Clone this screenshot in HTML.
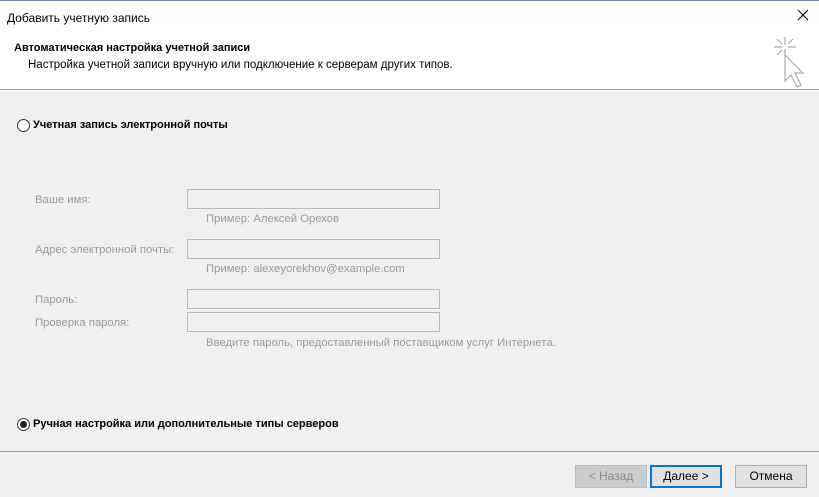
<!DOCTYPE html><html><head><style>
body{margin:0;width:819px;height:497px;overflow:hidden;background:#f0f0f0;font-family:"Liberation Sans",sans-serif;font-size:12px;color:#000;position:relative}
.a{position:absolute;white-space:nowrap}
.g{color:#9a9a9a;font-size:11.3px}
.in{position:absolute;left:187px;width:251px;height:18px;border:1px solid #b9b9b9;background:#f0f0f0}
.btn{position:absolute;top:465px;width:70px;height:21px;border:1px solid #adadad;background:#e1e1e1;text-align:center;line-height:21px;font-size:12px}
.r{position:absolute;width:11px;height:11px;border:1px solid #333;border-radius:50%;background:#fff}
</style></head><body>
<div class="a" style="left:0;top:0;width:819px;height:90px;background:#fff;border-top:1px solid #6b8fb5"></div>
<div class="a" style="left:0;top:89px;width:819px;height:1px;background:#a0a0a0"></div>
<div class="a" style="left:7px;top:11px;font-size:12px">Добавить учетную запись</div>
<svg class="a" style="left:797px;top:9px" width="12" height="12"><path d="M1 1L11 11M11 1L1 11" stroke="#000" stroke-width="1"/></svg>
<div class="a" style="left:14px;top:42px;font-weight:bold;font-size:11px">Автоматическая настройка учетной записи</div>
<div class="a" style="left:28px;top:59px;font-size:11.5px">Настройка учетной записи вручную или подключение к серверам других типов.</div>
<svg class="a" style="left:768px;top:36px" width="40" height="54"><g stroke="#aaa" stroke-width="1.2" fill="none"><path d="M17 1v8M17 13v8M6 11h8M20 11h8M9 3l5 5M25 3l-5 5M9 19l5-5"/><path d="M17 19l0 26l6-6l6 12l4-2l-6-12l8 0z" fill="#fff"/></g></svg>
<div class="r" style="left:17px;top:119px"></div>
<div class="a" style="left:33px;top:119px;font-weight:bold;font-size:11px">Учетная запись электронной почты</div>
<div class="a g" style="left:35px;top:194px">Ваше имя:</div>
<div class="in" style="top:189px"></div>
<div class="a g" style="left:206px;top:213px">Пример: Алексей Орехов</div>
<div class="a g" style="left:35px;top:244px">Адрес электронной почты:</div>
<div class="in" style="top:239px"></div>
<div class="a g" style="left:206px;top:263px">Пример: alexeyorekhov@example.com</div>
<div class="a g" style="left:35px;top:294px">Пароль:</div>
<div class="in" style="top:289px"></div>
<div class="a g" style="left:35px;top:317px">Проверка пароля:</div>
<div class="in" style="top:312px"></div>
<div class="a g" style="left:206px;top:337px">Введите пароль, предоставленный поставщиком услуг Интернета.</div>
<div class="r" style="left:17px;top:418px"></div>
<div class="a" style="left:20px;top:421px;width:7px;height:7px;border-radius:50%;background:#222"></div>
<div class="a" style="left:33px;top:418px;font-weight:bold;font-size:11px">Ручная настройка или дополнительные типы серверов</div>
<div class="a" style="left:0;top:451px;width:819px;height:1px;background:#a0a0a0"></div>
<div class="btn" style="left:575px;background:#cccccc;border-color:#bfbfbf;color:#8a8a8a">&lt; Назад</div>
<div class="btn" style="left:650px;width:68px;height:19px;line-height:19px;border:2px solid #0078d7">Далее &gt;</div>
<div class="btn" style="left:735px">Отмена</div>
</body></html>
